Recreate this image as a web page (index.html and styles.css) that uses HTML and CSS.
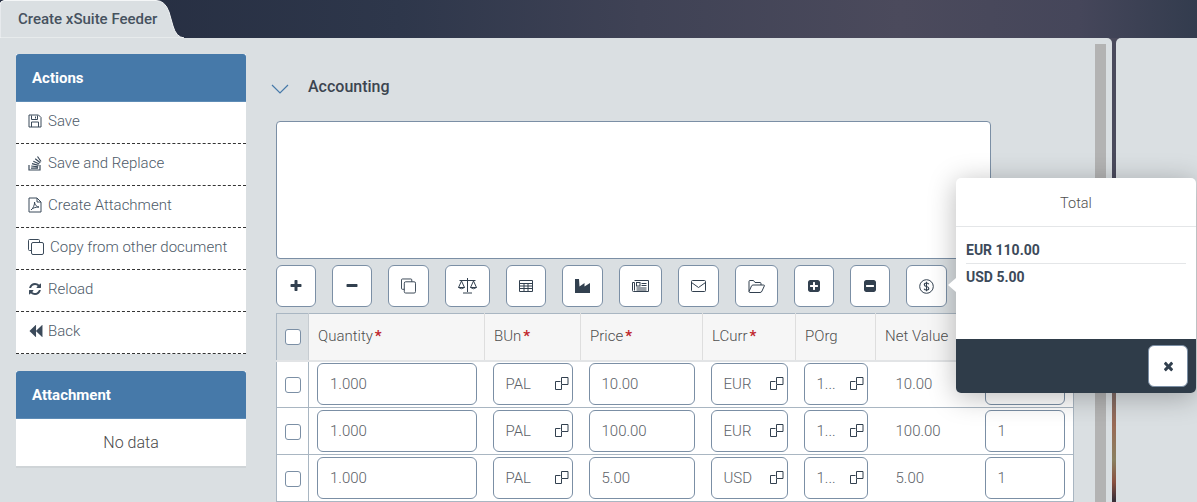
FILE: index.html
```html
<!DOCTYPE html>
<html lang="en">
<head>
<meta charset="utf-8">
<title>Create xSuite Feeder</title>
<link rel="stylesheet" href="styles.css">
</head>
<body>
<svg class="sprite" aria-hidden="true">
  <symbol id="i-field" viewBox="0 0 14 14"><path d="M.5 4.500H5.500M.5 4.500V12.500H6.500V8" fill="none" stroke="currentColor"/><path d="M6.500 .5H13V7.500H6.500z" fill="none" stroke="currentColor"/></symbol>
</svg>
<header class="topbar">
  <div class="tab">
    <svg class="tab-shape" viewBox="0 0 184 38" width="184" height="38"><path d="M0 38V5Q0 1 4 .5H156Q165 .5 169 12L173 26Q176 37 184 38Z" fill="#dadfe2" stroke="#f4f6f7"/></svg>
    <span class="tab-label">Create xSuite Feeder</span>
  </div>
</header>
<div class="workspace">
  <main class="panel">
    <aside class="sidebar">
      <section class="card">
        <h2 class="card-title">Actions</h2>
        <ul class="action-list">
          <li class="action"><svg width="14" height="14" viewBox="0 0 14 14" class="ai"><path d="M1 1H10.500L13 3.500V13H1zM3.500 1.500V5.500H9.500V1.500M7.500 2.500V4.500M3.500 13V8H10.500V13" fill="none" stroke="currentColor"/></svg><span>Save</span></li>
          <li class="action"><svg width="14" height="16" viewBox="0 0 14 16" class="ai"><path d="M1 10V15H12V10M3 13.200H10M3.200 11L10.200 11.800M4 8.700L10.600 10.300M5.300 6.300L11.300 9M7.200 3.800L12.300 7.800M9.500 1.500L13 6.500" fill="none" stroke="currentColor" stroke-width="1.200"/></svg><span>Save and Replace</span></li>
          <li class="action"><svg width="14" height="16" viewBox="0 0 14 16" class="ai"><path d="M1 1H9L13 5V15H1zM9 1V5H13M3 13C5 12 7 7 6.500 5C6.500 8 9 10 11 10C8 10 4 11 3 13Z" fill="none" stroke="currentColor"/></svg><span>Create Attachment</span></li>
          <li class="action"><svg width="16" height="16" viewBox="0 0 16 16" class="ai"><path d="M3.500 11.500H1.500Q.5 11.500 .5 10.500V1.500Q.5 .5 1.500 .5H10.500Q11.500 .5 11.500 1.500V3.500" fill="none" stroke="currentColor"/><rect x="3.500" y="3.500" width="12" height="12" rx="1.500" fill="none" stroke="currentColor"/></svg><span>Copy from other document</span></li>
          <li class="action"><svg width="14" height="14" viewBox="0 0 1792 1792" class="ai"><path fill="currentColor" d="M1639 1056q0 5-1 7-64 268-268 434.500t-478 166.500q-146 0-282.500-55t-243.500-157l-129 129q-19 19-45 19t-45-19-19-45v-448q0-26 19-45t45-19h448q26 0 45 19t19 45-19 45l-137 137q71 66 161 102t187 36q134 0 250-65t186-179q11-17 53-117 8-23 30-23h192q13 0 22.500 9.500t9.500 22.500zm25-800v448q0 26-19 45t-45 19h-448q-26 0-45-19t-19-45 19-45l138-138q-148-137-349-137-134 0-250 65t-186 179q-11 17-53 117-8 23-30 23h-199q-13 0-22.500-9.500t-9.500-22.500v-7q65-268 270-434.500t480-166.500q146 0 284 55.500t245 156.500l130-129q19-19 45-19t45 19 19 45z"/></svg><span>Reload</span></li>
          <li class="action action-back"><svg width="15" height="14" viewBox="0 0 1792 1792" preserveAspectRatio="none" class="ai"><path fill="currentColor" d="M1683 141q19-19 32-13t13 32v1472q0 26-13 32t-32-13l-710-710q-9-9-13-19v710q0 26-13 32t-32-13l-710-710q-19-19-19-45t19-45l710-710q19-19 32-13t13 32v710q4-10 13-19z"/></svg><span>Back</span></li>
        </ul>
      </section>
      <section class="card card-attach">
        <h2 class="card-title">Attachment</h2>
        <p class="no-data">No data</p>
      </section>
    </aside>
    <div class="content">
      <div class="section-head">
        <svg width="18" height="10" viewBox="0 0 18 10" class="chev"><path d="M1 1L9 9L17 1" fill="none" stroke="currentColor" stroke-width="1.200"/></svg>
        <h3 class="section-title">Accounting</h3>
      </div>
      <textarea class="note" aria-label="Notes"></textarea>
      <div class="toolbar">
        <button class="tbtn"><svg width="14" height="14" viewBox="0 0 1792 1792"><path fill="currentColor" d="M1600 736v192q0 40-28 68t-68 28h-416v416q0 40-28 68t-68 28h-192q-40 0-68-28t-28-68v-416h-416q-40 0-68-28t-28-68v-192q0-40 28-68t68-28h416v-416q0-40 28-68t68-28h192q40 0 68 28t28 68v416h416q40 0 68 28t28 68z"/></svg></button>
        <button class="tbtn"><svg width="14" height="14" viewBox="0 0 1792 1792"><path fill="currentColor" d="M1600 736v192q0 40-28 68t-68 28h-1216q-40 0-68-28t-28-68v-192q0-40 28-68t68-28h1216q40 0 68 28t28 68z"/></svg></button>
        <button class="tbtn"><svg width="15" height="16" viewBox="0 0 16 16"><path d="M3.500 11.500H1.500Q.5 11.500 .5 10.500V1.500Q.5 .5 1.500 .5H10.500Q11.500 .5 11.500 1.500V3.500" fill="none" stroke="currentColor"/><rect x="3.500" y="3.500" width="12" height="12" rx="1.500" fill="none" stroke="currentColor"/></svg></button>
        <button class="tbtn"><svg width="19" height="16" viewBox="0 0 19 16"><path d="M9.500 0V14M5 15H14M1.500 2.500H17.500M3.500 3L.5 9.500Q3.500 12 6.500 9.500zM15.500 3L12.500 9.500Q15.500 12 18.500 9.500zM.5 9.500H6.500M12.500 9.500H18.500" fill="none" stroke="currentColor"/></svg></button>
        <button class="tbtn"><svg width="14" height="12" viewBox="0 0 14 12"><path fill="none" stroke="currentColor" d="M.5 .5H13.500V11.500H.5ZM.5 3.500H13.500M.5 6H13.500M.5 8.500H13.500M5 3.500V11.500M9 3.500V11.500"/></svg></button>
        <button class="tbtn"><svg width="15" height="14" viewBox="0 0 15 14"><path fill="currentColor" d="M0 0H4L4.500 7.500L9.500 4V7.500L15 4V14H0Z"/></svg></button>
        <button class="tbtn"><svg width="17" height="12" viewBox="0 0 17 12"><path d="M2.500 .5H16.500V11.500H1.500Q.5 11.500 .5 10.500V2.500H2.500V10.500M9.500 3.500H14.500M9.500 5.500H14.500M4.500 8H14.500M4.500 10H14.500" fill="none" stroke="currentColor"/><rect x="4.500" y="2.500" width="3.500" height="3.500" fill="none" stroke="currentColor"/></svg></button>
        <button class="tbtn"><svg width="15" height="12" viewBox="0 0 15 12"><rect x=".5" y=".5" width="14" height="11" rx="1" fill="none" stroke="currentColor"/><path d="M.5 2.500L7.500 7.500L14.500 2.500" fill="none" stroke="currentColor"/></svg></button>
        <button class="tbtn"><svg width="17" height="13" viewBox="0 0 17 13"><path d="M1 11.500V1.500Q1 .5 2 .5H5.500L7 2.500H12Q13 2.500 13 3.500V5M1 11.500L3.500 6Q4 5 5 5H15.500Q16.800 5 16.300 6L14 11Q13.500 12.500 12 12.500H2Q1 12.500 1 11.500Z" fill="none" stroke="currentColor"/></svg></button>
        <button class="tbtn"><svg width="14" height="14" viewBox="0 0 1792 1792"><path fill="currentColor" d="M1408 960v-128q0-26-19-45t-45-19h-320v-320q0-26-19-45t-45-19h-128q-26 0-45 19t-19 45v320h-320q-26 0-45 19t-19 45v128q0 26 19 45t45 19h320v320q0 26 19 45t45 19h128q26 0 45-19t19-45v-320h320q26 0 45-19t19-45zm256-544v960q0 119-84.500 203.500t-203.500 84.500h-960q-119 0-203.500-84.500t-84.500-203.500v-960q0-119 84.500-203.500t203.500-84.500h960q119 0 203.500 84.500t84.500 203.500z"/></svg></button>
        <button class="tbtn"><svg width="14" height="14" viewBox="0 0 1792 1792"><path fill="currentColor" d="M1408 960v-128q0-26-19-45t-45-19h-896q-26 0-45 19t-19 45v128q0 26 19 45t45 19h896q26 0 45-19t19-45zm256-544v960q0 119-84.500 203.500t-203.500 84.500h-960q-119 0-203.500-84.500t-84.500-203.500v-960q0-119 84.500-203.500t203.500-84.500h960q119 0 203.500 84.500t84.500 203.500z"/></svg></button>
        <button class="tbtn"><svg width="15" height="15" viewBox="0 0 15 15"><circle cx="7.500" cy="7.500" r="6.800" fill="none" stroke="currentColor"/><path d="M9.800 5.300Q9.300 4 7.500 4Q5.300 4 5.300 5.700Q5.300 7 7.500 7.500Q9.800 8 9.800 9.400Q9.800 11 7.500 11Q5.600 11 5.100 9.700M7.500 2.800V12.200" fill="none" stroke="currentColor" stroke-width="1.100"/></svg></button>
      </div>
      <table class="grid">
        <colgroup><col class="c-check"><col class="c-qty"><col class="c-bun"><col class="c-price"><col class="c-curr"><col class="c-porg"><col class="c-net"><col class="c-last"></colgroup>
        <thead>
          <tr>
            <th class="check-head"><input type="checkbox" class="check" aria-label="Select all"></th>
            <th>Quantity<b class="req">*</b></th>
            <th>BUn<b class="req">*</b></th>
            <th>Price<b class="req">*</b></th>
            <th>LCurr<b class="req">*</b></th>
            <th>POrg</th>
            <th>Net Value</th>
            <th></th>
          </tr>
        </thead>
        <tbody>
          <tr>
            <td class="check-cell"><input type="checkbox" class="check" aria-label="Select row"></td>
            <td><div class="field">1.000</div></td>
            <td><div class="field field-pick">PAL<svg class="pick"><use href="#i-field"/></svg></div></td>
            <td><div class="field">10.00</div></td>
            <td><div class="field field-pick">EUR<svg class="pick"><use href="#i-field"/></svg></div></td>
            <td><div class="field field-pick">1...<svg class="pick"><use href="#i-field"/></svg></div></td>
            <td class="net">10.00</td>
            <td><div class="field">1</div></td>
          </tr>
          <tr>
            <td class="check-cell"><input type="checkbox" class="check" aria-label="Select row"></td>
            <td><div class="field">1.000</div></td>
            <td><div class="field field-pick">PAL<svg class="pick"><use href="#i-field"/></svg></div></td>
            <td><div class="field">100.00</div></td>
            <td><div class="field field-pick">EUR<svg class="pick"><use href="#i-field"/></svg></div></td>
            <td><div class="field field-pick">1...<svg class="pick"><use href="#i-field"/></svg></div></td>
            <td class="net">100.00</td>
            <td><div class="field">1</div></td>
          </tr>
          <tr>
            <td class="check-cell"><input type="checkbox" class="check" aria-label="Select row"></td>
            <td><div class="field">1.000</div></td>
            <td><div class="field field-pick">PAL<svg class="pick"><use href="#i-field"/></svg></div></td>
            <td><div class="field">5.00</div></td>
            <td><div class="field field-pick">USD<svg class="pick"><use href="#i-field"/></svg></div></td>
            <td><div class="field field-pick">1...<svg class="pick"><use href="#i-field"/></svg></div></td>
            <td class="net">5.00</td>
            <td><div class="field">1</div></td>
          </tr>
        </tbody>
      </table>
    </div>
    <div class="scrollbar"></div>
    <div class="popover">
      <div class="pop-arrow"></div>
      <div class="pop-title">Total</div>
      <div class="pop-body">
        <div class="pop-line">EUR 110.00</div>
        <div class="pop-line">USD 5.00</div>
      </div>
      <div class="pop-foot">
        <button class="tbtn pop-close"><svg width="11" height="14" viewBox="170 0 1450 1792" preserveAspectRatio="none"><path fill="currentColor" d="M1490 1322q0 40-28 68l-136 136q-28 28-68 28t-68-28l-294-294-294 294q-28 28-68 28t-68-28l-136-136q-28-28-28-68t28-68l294-294-294-294q-28-28-28-68t28-68l136-136q28-28 68-28t68 28l294 294 294-294q28-28 68-28t68 28l136 136q28 28 28 68t-28 68l-294 294 294 294q28 28 28 68z"/></svg></button>
      </div>
    </div>
  </main>
  <div class="side-panel"></div>
</div>
</body>
</html>
```
FILE: styles.css
```css
* { box-sizing: border-box; }
html, body { margin: 0; height: 100%; }
body {
  position: relative;
  height: 502px;
  overflow: hidden;
  font-family: Roboto, "Liberation Sans", sans-serif;
  font-size: 15px;
  color: #32404f;
  background: linear-gradient(180deg, #4a4a5c 0, #4a4a5c 340px, #7d6a66 392px, #9a6a55 425px, #8a8060 460px, #8a5040 482px, #3a3038 500px);
  display: flex;
  flex-direction: column;
}
.sprite { display: none; }
.topbar {
  height: 38px;
  flex: none;
  display: flex;
  background: linear-gradient(90deg, #232b3e 0, #2e374b 400px, #3f4255 640px, #4b4a5c 900px, #45465a 1080px, #333c4e 1197px);
}
.tab {
  position: relative;
  width: 184px;
  height: 38px;
  padding: 11px 0 0 18px;
}
.tab-shape { position: absolute; left: 0; top: 0; }
.tab-label { position: relative; font-size: 15px; font-weight: 500; color: #46525f; line-height: 17px; display: block; }
.workspace { flex: 1; display: flex; gap: 4px; min-height: 0; }
.panel {
  position: relative;
  width: 1112px;
  flex: none;
  display: flex;
  background: #dadfe2;
  border-top-right-radius: 5px;
  padding-left: 16px;
}
.side-panel { flex: 1; background: #dadfe2; border-top-left-radius: 5px; }
.sidebar { width: 230px; flex: none; padding-top: 16px; display: flex; flex-direction: column; gap: 17px; }
.card { background: #fff; }
.card-attach { border-bottom: 2px solid #cfd4d7; }
.card-title {
  margin: 0;
  height: 48px;
  padding: 0 0 0 16px;
  display: flex;
  align-items: center;
  background: #4679a9;
  border-radius: 3px 3px 0 0;
  border-bottom: 1px solid #5e8cb6;
  color: #fff;
  font-size: 15px;
  font-weight: 700;
}
.action-list { list-style: none; margin: 0; padding: 0; }
.action {
  height: 42px;
  padding: 0 0 3px 12px;
  display: flex;
  align-items: center;
  gap: 6px;
  border-bottom: 1px dashed #333;
  font-weight: 300;
  font-size: 15px;
  color: #4d5a68;
}
.ai { flex: none; color: #3b4a5a; }
.action-back { gap: 5px; }
.no-data { margin: 0; height: 47px; display: flex; align-items: center; justify-content: center; font-weight: 300; font-size: 16px; color: #4a4a4a; }
.content { width: 798px; flex: none; margin-left: 30px; padding-top: 33px; }
.section-head { display: flex; align-items: center; height: 32px; margin-left: -5px; gap: 19px; }
.chev { color: #4679a9; flex: none; margin-top: 3px; }
.section-title { margin: 0; padding-bottom: 1px; font-size: 16px; font-weight: 500; color: #3c4550; }
.note {
  display: block;
  width: 715px;
  height: 138px;
  margin: 18px 0 6px;
  background: #fff;
  border: 1px solid #7b8fa5;
  border-radius: 4px;
  resize: none;
}
.toolbar { display: flex; gap: 16px; margin-bottom: 6px; }
.tbtn {
  height: 42px;
  padding: 0 12px;
  display: flex;
  align-items: center;
  justify-content: center;
  background: #fff;
  border: 1px solid #7b8fa5;
  border-radius: 6px;
  color: #32404f;
}
.tbtn svg { flex: none; }
.grid {
  width: 797px;
  table-layout: fixed;
  border-collapse: collapse;
  border: 1px solid #a9b6c2;
  border-top: 1px solid #a9b6c2;
}
.c-check { width: 32px; }
.c-qty { width: 176px; }
.c-bun { width: 96px; }
.c-price { width: 122px; }
.c-curr { width: 93px; }
.c-porg { width: 80px; }
.c-net { width: 101px; }
.c-last { width: 97px; }
.grid th {
  height: 47px;
  padding: 0 0 2px 9px;
  background: #f6f6f6;
  border-left: 1px solid #dedede;
  border-bottom: 2px solid #e2e4e6;
  text-align: left;
  font-weight: 300;
  font-size: 15px;
  color: #4f4f4f;
  white-space: nowrap;
}
.grid th.check-head { background: #dadfe2; border-left: 0; padding: 0 0 2px 1px; text-align: center; border-right: 1px solid #c6ccd1; }
.req { color: #c0272d; margin-left: 2px; font-weight: 700; }
.grid td {
  height: 47px;
  padding: 0 8px;
  background: #fff;
  border-bottom: 1px solid #a9b6c2;
  font-weight: 300;
}
.grid td.check-cell { padding: 0 0 0 1px; text-align: center; border-right: 1px solid #a9b6c2; }
.check {
  appearance: none;
  display: inline-block;
  vertical-align: middle;
  width: 16px;
  height: 16px;
  margin: 0;
  background: #fff;
  border: 1px solid #7b8fa5;
  border-radius: 3px;
}
.field {
  display: flex;
  align-items: center;
  height: 42px;
  padding: 0 12px;
  background: #fff;
  border: 1px solid #7b8fa5;
  border-radius: 6px;
  font-weight: 300;
  font-size: 15px;
  color: #5c6268;
}
.field-pick { justify-content: space-between; padding-right: 3px; }
.pick { width: 14px; height: 14px; flex: none; color: #32404f; }
.grid td.net { padding-left: 20px; font-size: 15px; color: #5c6268; }
.scrollbar {
  width: 11px;
  margin: 6px 6px 0 auto;
  background: #b3b3b3;
}
.popover {
  position: absolute;
  left: 956px;
  top: 140px;
  width: 240px;
  height: 215px;
  background: #fff;
  border-radius: 5px;
  box-shadow: 0 4px 28px rgba(0, 0, 0, .28);
  display: flex;
  flex-direction: column;
}
.pop-arrow {
  position: absolute;
  left: -8px;
  top: 100px;
  border: solid transparent;
  border-width: 7px 8px 7px 0;
  border-right-color: #fff;
}
.pop-title {
  height: 49px;
  padding-top: 2px;
  flex: none;
  display: flex;
  align-items: center;
  justify-content: center;
  border-bottom: 1px solid #e4e6e8;
  font-weight: 300;
  font-size: 14.500px;
  color: #4f4f4f;
}
.pop-body { flex: 1; padding: 10px 10px 0; }
.pop-line {
  line-height: 26px;
  font-weight: 700;
  font-size: 14px;
  color: #3c4a5a;
}
.pop-line + .pop-line { border-top: 1px solid #e4e6e8; }
.pop-foot {
  height: 54px;
  flex: none;
  padding: 6px 8px 0 0;
  display: flex;
  justify-content: flex-end;
  background: #2f3c49;
  border-radius: 0 0 5px 5px;
}
.pop-close { width: 40px; padding: 0; }
```
